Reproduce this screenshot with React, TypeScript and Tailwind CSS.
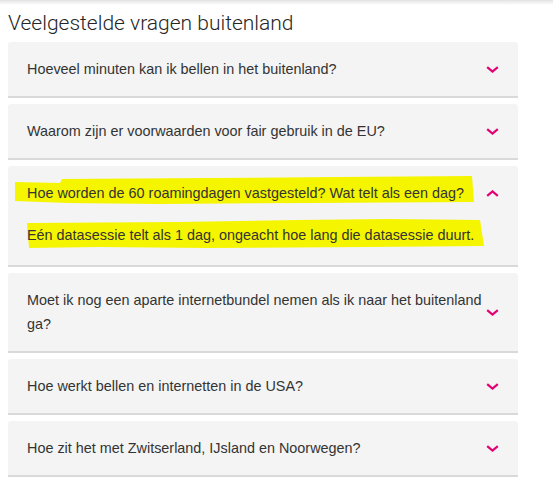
import React from 'react';

type Faq = { q: string; a?: string };

const faqs: Faq[] = [
  { q: 'Hoeveel minuten kan ik bellen in het buitenland?' },
  { q: 'Waarom zijn er voorwaarden voor fair gebruik in de EU?' },
  {
    q: 'Hoe worden de 60 roamingdagen vastgesteld? Wat telt als een dag?',
    a: 'Eén datasessie telt als 1 dag, ongeacht hoe lang die datasessie duurt.',
  },
  { q: 'Moet ik nog een aparte internetbundel nemen als ik naar het buitenland ga?' },
  { q: 'Hoe werkt bellen en internetten in de USA?' },
  { q: 'Hoe zit het met Zwitserland, IJsland en Noorwegen?' },
];

function Chevron({ up }: { up?: boolean }) {
  return (
    <svg width="13" height="7" viewBox="0 0 13 7" className={up ? 'rotate-180' : ''}>
      <path d="M1.2 1.2 L6.5 5.6 L11.8 1.2" fill="none" stroke="#e20074" strokeWidth="2.2" />
    </svg>
  );
}

function Highlight() {
  // marker annotation drawn over the open item
  return (
    <svg
      className="absolute left-0 top-0 pointer-events-none"
      width="510"
      height="100"
      viewBox="0 0 510 100"
    >
      <path
        d="M7 16 L52 17 L54 13 L200 12 L330 11 L464 10 L466 36 L300 37 L150 38 L60 37 L7 35 Z"
        fill="#f5f500"
      />
      <path
        d="M19 57 L170 56 L290 54 L380 53 L472 54 L476 80 L360 81 L200 82 L90 81 L21 82 Z"
        fill="#f5f500"
      />
    </svg>
  );
}

function FaqItem({ item }: { item: Faq }) {
  const open = !!item.a;
  return (
    <div className="relative bg-[#f4f4f4] rounded-t-[3px] border-b-2 border-[#d9d9d9]">
      {open && <Highlight />}
      <div className={`relative flex ${open ? 'items-start' : 'items-center'} pl-[19px] pr-[19px] py-[15px]`}>
        <div className="flex-1 text-[14.4px] leading-[24px] text-[#333]">
          <div>{item.q}</div>
          {item.a && <div className="mt-[18px] mb-[3px]">{item.a}</div>}
        </div>
        <div className={open ? 'pt-[9px]' : ''}>
          <Chevron up={open} />
        </div>
      </div>
    </div>
  );
}

export default function App() {
  return (
    <div className="w-[554px] h-[495px] bg-white overflow-hidden" style={{ fontFamily: '"Liberation Sans", Arial, sans-serif' }}>
      <div className="h-[5px] w-[553px] bg-gradient-to-b from-[#e2e2e2] to-white" />
      <div className="px-[8px] w-[526px]">
        <h1
          className="mt-[4px] text-[21px] leading-[28px] font-light text-[#262626]"
          style={{ fontFamily: 'Roboto, "Liberation Sans", sans-serif' }}
        >
          Veelgestelde vragen buitenland
        </h1>
        <div className="mt-[5px] flex flex-col gap-[6px]">
          {faqs.map((f) => (
            <FaqItem key={f.q} item={f} />
          ))}
        </div>
      </div>
    </div>
  );
}
